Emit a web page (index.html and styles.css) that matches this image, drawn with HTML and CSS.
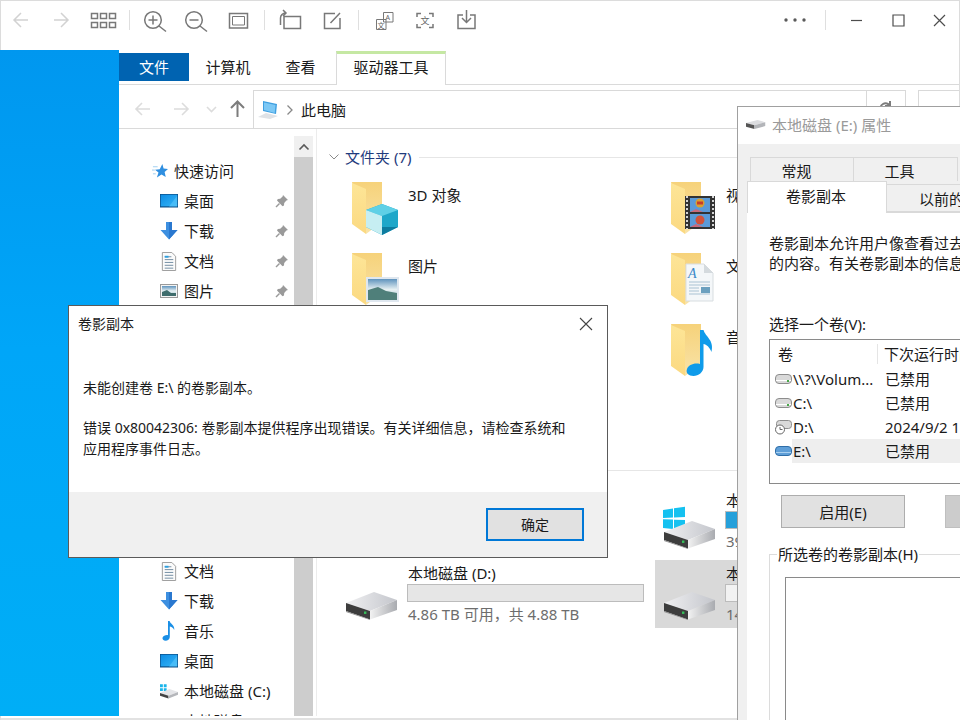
FILE: index.html
```html
<!DOCTYPE html>
<html lang="zh-CN">
<head>
<meta charset="utf-8">
<title>此电脑</title>
<link rel="stylesheet" href="styles.css">
</head>
<body>
<svg class="defs" aria-hidden="true">
  <defs>
    <linearGradient id="gTop" x1="0" y1="0" x2="1" y2="0"><stop offset="0" stop-color="#f0f0f2"/><stop offset="1" stop-color="#c4c6cc"/></linearGradient>
    <linearGradient id="gSide" x1="0" y1="0" x2="1" y2="0"><stop offset="0" stop-color="#f2f2f2"/><stop offset="1" stop-color="#a9abb0"/></linearGradient>
    <linearGradient id="gFold" x1="0" y1="0" x2="0" y2="1"><stop offset="0" stop-color="#f6d27a"/><stop offset="1" stop-color="#f9e3a8"/></linearGradient>
    <linearGradient id="gFlap" x1="0" y1="0" x2="0" y2="1"><stop offset="0" stop-color="#fde597"/><stop offset="1" stop-color="#fbd981"/></linearGradient>
    <linearGradient id="gMon" x1="0" y1="0" x2="1" y2="1"><stop offset="0" stop-color="#0d8be3"/><stop offset="1" stop-color="#35b6f7"/></linearGradient>
    <linearGradient id="gSky" x1="0" y1="0" x2="0" y2="1"><stop offset="0" stop-color="#5f93bd"/><stop offset=".5" stop-color="#e6f0f2"/><stop offset="1" stop-color="#9fc2cf"/></linearGradient>
    <symbol id="pin" viewBox="0 0 14 14"><path d="M8 1l5 5-1.600.6-2.200 2.500-.2 2.400-1.500.8L2 6.400l.8-1.400 2.400-.2 2.400-2.200z" fill="#9a9a9a"/><path d="M4.500 9.500L1 13" stroke="#9a9a9a" stroke-width="1.400"/></symbol>
    <symbol id="mon" viewBox="0 0 18 14"><rect width="18" height="13.500" fill="#0c4e86"/><rect x=".7" y=".7" width="16.600" height="11.600" fill="url(#gMon)"/><path d="M17 2L9 12.400h8z" fill="#5cc7fa" opacity=".6"/></symbol>
    <symbol id="arrowd" viewBox="0 0 18 18"><path d="M6 0h6v8h5.500L9 17.500.5 8H6z" fill="#3d8fe0"/><path d="M9 0h3v8h5.500L9 17.500z" fill="#2a78cf"/></symbol>
    <symbol id="docs" viewBox="0 0 16 20"><path d="M1 .5h10l4 4v15H1z" fill="#fbfbfb" stroke="#9a9a9a"/><path d="M3.500 5h7M3.500 8h9M3.500 11h9M3.500 14h9M3.500 17h9" stroke="#6f8aa0"/><path d="M3.500 5h4" stroke="#2c9fe0" stroke-width="2"/></symbol>
    <symbol id="pic" viewBox="0 0 18 14"><rect x=".5" y=".5" width="17" height="13" fill="#f4f4f4" stroke="#9a9a9a"/><rect x="2" y="2" width="14" height="10" fill="url(#gSky)"/><path d="M2 8l5-2 4 3 5 0v3H2z" fill="#3f6d6d"/></symbol>
    <symbol id="note" viewBox="0 0 14 20"><path d="M6 0h1.600c.6 3 5.400 4 4.600 9-.8-2.400-3-3.200-4.400-3.400V16c0 2.400-2.200 3.800-4.200 3.800S0 18.400.6 16.600 3.800 13.800 6 14.200z" fill="#1a8fe6"/></symbol>
    <symbol id="star" viewBox="0 0 17 16"><path d="M11 .5l1.300 4.800 4.700.6-3.600 3.200 1.200 5.400-4.500-2.900-4.900 3.400 1.700-5.400-3.700-3 5-.4z" fill="#2f8fe0"/><path d="M1 3.500h5M0 7h3M1 11h3" stroke="#9ccdf0"/></symbol>
    <symbol id="drive" viewBox="0 0 52 28"><path d="M0 11L28 0l23 8-27 11z" fill="url(#gTop)"/><path d="M0 11l24 8v8.500L0 19z" fill="#3d3d3d"/><path d="M24 19l27-11v10L24 27.500z" fill="url(#gSide)"/><path d="M0 19l24 8.500v.5L0 20z" fill="#8d8d8d"/><rect x="18" y="19.500" width="2.400" height="2.400" fill="#35c25a"/></symbol>
    <symbol id="folder" viewBox="0 0 32 52"><path d="M1 0h30v40L15 52z" fill="url(#gFold)"/><path d="M1 1l14 6v45L1 42z" fill="url(#gFlap)"/></symbol>
    <symbol id="hddS" viewBox="0 0 17 12"><rect x=".5" y="1.500" width="16" height="9" rx="3.500" fill="#d9d9d9" stroke="#8d8d8d"/><path d="M1 7.500h15" stroke="#fff"/><rect x="12" y="7" width="2" height="2" fill="#49a849"/></symbol>
  </defs>
</svg>

<div class="screen">
  <header class="toolbar">
    <div class="tb-left">
      <svg class="tb-icon" width="41" height="30"><path class="ln-off" d="M27 15H13M20 8l-7 7 7 7"/></svg>
      <svg class="tb-icon" width="41" height="30"><path class="ln-off" d="M12 15h14M19 8l7 7-7 7"/></svg>
      <svg class="tb-icon" width="41" height="30"><path class="ln" d="M8.500 8.500h6v5h-6zM17.500 8.500h6v5h-6zM26.500 8.500h6v5h-6zM8.500 17.500h6v5h-6zM17.500 17.500h6v5h-6zM26.500 17.500h6v5h-6z"/></svg>
      <span class="sep sep-a"></span>
      <svg class="tb-icon" width="41" height="30"><circle class="ln" cx="20" cy="15" r="8.300"/><path class="ln" d="M26 21l7 5.500M20 10.500v9M15.500 15h9"/></svg>
      <svg class="tb-icon" width="41" height="30"><circle class="ln" cx="20" cy="15" r="8.300"/><path class="ln" d="M26 21l7 5.500M15.500 15h9"/></svg>
      <svg class="tb-icon" width="41" height="30"><path class="ln" d="M14.500 8.500h18v14.500h-18z"/><path class="ln-thin" d="M17.500 11.500h12v8.500h-12z"/></svg>
      <span class="sep sep-b"></span>
      <svg class="tb-icon" width="41" height="30"><path class="ln" d="M13 11.500h16.500v12H13zM9.500 20v-7a5 5 0 0 1 5-5M12 5l3 3-3 3"/></svg>
      <svg class="tb-icon" width="41" height="30"><path class="ln" d="M23 8.500H12.500V23.500H28V13M18.500 18L28 8"/></svg>
      <span class="sep sep-c"></span>
      <svg class="tb-icon" width="41" height="30"><path class="ln-thin" d="M20.500 7.500h9.500v9.500h-9.500zM13.500 14.500h9.500v10h-9.500z" /><text class="glyph" x="22.500" y="15">A</text><text class="glyph" x="14.500" y="23">文</text></svg>
      <svg class="tb-icon" width="41" height="30"><path class="ln" d="M13 12V8.500h4M25 8.500h4V12M13 19v3.500h4M25 22.500h4V19"/><text class="glyph-l" x="16.500" y="19">文</text></svg>
      <svg class="tb-icon" width="41" height="30"><path class="ln" d="M18 10h-5v13.500h17V10h-5M21.500 5v12M17 13l4.500 4.500L26 13"/></svg>
    </div>
    <div class="tb-right">
      <svg class="tb-icon" width="41" height="30"><circle class="dot" cx="12" cy="15" r="1.700"/><circle class="dot" cx="21" cy="15" r="1.700"/><circle class="dot" cx="30" cy="15" r="1.700"/></svg>
      <span class="sep sep-d"></span>
      <svg class="tb-icon" width="41" height="30"><path class="ln-win" d="M15 15.500h11"/></svg>
      <svg class="tb-icon" width="41" height="30"><path class="ln-win" d="M16 10h11v11H16z"/></svg>
      <svg class="tb-icon" width="41" height="30"><path class="ln-win" d="M16 10l11 11M27 10L16 21"/></svg>
    </div>
  </header>

  <div class="desk">
    <div class="wallpaper"></div>
    <div class="explorer">
      <nav class="ribbon">
        <span class="rtab rtab-file">文件</span>
        <span class="rtab rtab-pc">计算机</span>
        <span class="rtab rtab-view">查看</span>
        <span class="rtab rtab-ctx">驱动器工具</span>
      </nav>

      <div class="navrow">
        <svg width="39" height="38"><path class="ln-faint" d="M27 19H13M19 13l-6 6 6 6"/></svg>
        <svg width="39" height="38"><path class="ln-faint" d="M12 19h14M20 13l6 6-6 6"/></svg>
        <svg width="21" height="38"><path class="ln-faint" d="M6 17l4.500 4.500L15 17"/></svg>
        <svg width="31" height="38"><path class="ln-up" d="M15.500 27V12M9 18l6.500-6.500L22 18"/></svg>
        <div class="addr">
          <svg class="pc" width="22" height="20" viewBox="0 0 22 20"><path d="M6 1l14 3-1 10-13-3z" fill="#3f9fe0"/><path d="M7 2.500l11.500 2.500-.8 8L7 10z" fill="#7cc8f5"/><path d="M1 17l8-4 12 3-8 3z" fill="#dfe2e6"/></svg>
          <svg width="8" height="12"><path class="ln-chev" d="M1.500 1.500L6 6l-4.500 4.500"/></svg>
          <span class="addr-text">此电脑</span>
        </div>
        <div class="refresh"><svg width="14" height="20"><path class="ln-up" d="M2 14a5 5 0 0 1 9-5M11 4v5H6"/></svg></div>
        <div class="search"></div>
      </div>

      <div class="pane">
        <aside class="side">
          <ul class="tree">
            <li class="row row-head"><svg width="16" height="16"><use href="#star"/></svg><span>快速访问</span></li>
            <li class="row"><svg width="18" height="14"><use href="#mon"/></svg><span>桌面</span><svg class="pin" width="14" height="14"><use href="#pin"/></svg></li>
            <li class="row"><svg width="18" height="18"><use href="#arrowd"/></svg><span>下载</span><svg class="pin" width="14" height="14"><use href="#pin"/></svg></li>
            <li class="row"><svg width="18" height="19"><use href="#docs"/></svg><span>文档</span><svg class="pin" width="14" height="14"><use href="#pin"/></svg></li>
            <li class="row"><svg width="18" height="14"><use href="#pic"/></svg><span>图片</span><svg class="pin" width="14" height="14"><use href="#pin"/></svg></li>
            <li class="tree-gap"></li>
            <li class="row"><svg width="18" height="19"><use href="#docs"/></svg><span>文档</span></li>
            <li class="row"><svg width="18" height="18"><use href="#arrowd"/></svg><span>下载</span></li>
            <li class="row"><svg width="18" height="20"><use href="#note"/></svg><span>音乐</span></li>
            <li class="row"><svg width="18" height="14"><use href="#mon"/></svg><span>桌面</span></li>
            <li class="row"><svg width="19" height="16" viewBox="0 0 19 16"><path d="M0 1h3v3H0zM4 1h3v3H4zM0 5h3v3H0zM4 5h3v3H4z" fill="#19b4ea"/><path d="M0 10l10-4 9 3-10 4z" fill="#e4e5e8"/><path d="M0 10l9 3v3l-9-3z" fill="#444"/><path d="M9 13l10-4v3l-10 4z" fill="#b5b7bb"/></svg><span>本地磁盘 (C:)</span></li>
            <li class="row"><svg width="19" height="16"></svg><span>本地磁盘 (D:)</span></li>
          </ul>
        </aside>
        <div class="scroll"><div class="scroll-up"><svg width="12" height="8"><path class="ln-scroll" d="M1.500 6.500L6 2l4.500 4.500"/></svg></div><div class="scroll-thumb"></div></div>

        <main class="content">
          <div class="sec-head">
            <svg width="10" height="8"><path class="ln-sec" d="M.5 1.500l4.500 4.500 4.500-4.500"/></svg>
            <span class="sec-title">文件夹 (7)</span>
            <span class="sec-line"></span>
          </div>
          <div class="folders">
            <div class="ftile">
              <svg class="ficon" width="56" height="60" viewBox="0 0 56 60">
                <use href="#folder" x="6" y="5" width="32" height="52"/>
                <path d="M37 27l16 6v17l-16 8-16-8V33z" fill="#1ea7c9"/><path d="M37 27l16 6-16 6-16-6z" fill="#5fd0e6"/><path d="M21 33l16 6v19l-16-8z" fill="#c6eef2"/><path d="M37 50l16 0-16 8z" fill="#0d7c9f"/>
              </svg>
              <span class="flabel">3D 对象</span>
            </div>
            <div class="ftile">
              <svg class="ficon" width="56" height="60" viewBox="0 0 56 60">
                <use href="#folder" x="7" y="5" width="32" height="52"/>
                <rect x="22" y="19" width="30" height="33" fill="#333"/><path class="sprocket" d="M24 19v33M50 19v33"/><rect x="27" y="21" width="20" height="14" fill="#5a9ad8"/><rect x="27" y="37" width="20" height="13" fill="#5a9ad8"/><circle cx="37" cy="26" r="4.500" fill="#d9a030"/><path d="M34 26h6" stroke="#c83a2a" stroke-width="3"/><circle cx="37" cy="43" r="4.500" fill="#d2523a"/><path d="M27 35l6-3 7 3zM27 50l6-3 7 3z" fill="#c86a7c"/>
              </svg>
              <span class="flabel">视频</span>
            </div>
            <div class="ftile">
              <svg class="ficon" width="56" height="60" viewBox="0 0 56 60">
                <use href="#folder" x="6" y="5" width="32" height="52"/>
                <rect x="21" y="29" width="33" height="25" fill="#dfe7ef"/><rect x="23" y="31" width="29" height="21" fill="url(#gSky)"/><path d="M23 42l10-3 8 4 11 2v7H23z" fill="#4f7f7a"/>
              </svg>
              <span class="flabel">图片</span>
            </div>
            <div class="ftile">
              <svg class="ficon" width="56" height="60" viewBox="0 0 56 60">
                <use href="#folder" x="7" y="5" width="32" height="52"/>
                <path d="M23 16h18l9 9v28H23z" fill="#f4f7f9" stroke="#d8dde0"/><path d="M41 16l9 9h-9z" fill="#d4dade"/><text class="doc-a" x="25" y="30">A</text><path d="M26 34h21M26 37h21M26 40h10M26 43h10M26 46h21" stroke="#a9c2d3"/><rect x="38" y="39" width="9" height="6" fill="#6ba0bf"/>
              </svg>
              <span class="flabel">文档</span>
            </div>
            <div class="ftile ftile-r">
              <svg class="ficon" width="56" height="60" viewBox="0 0 56 60">
                <use href="#folder" x="7" y="5" width="32" height="52"/>
                <path d="M37 11h3.500c2 7 11 10 8 22-2-5-5-7.500-8-8V48c0 5-5 9-10 9s-8-3-6.500-7 7-6.500 13-5z" fill="#0f9bea"/>
              </svg>
              <span class="flabel">音乐</span>
            </div>
          </div>

          <div class="sec-rule"></div>

          <div class="drives">
            <div class="dtile dtile-c">
              <svg class="dicon" width="55" height="68" viewBox="0 0 55 68">
                <path d="M0 23l10-1.500v9L0 31zM11 21.300l11-1.500V30l-11 .6zM0 32.300l10 .3V42L0 41zM11 32.700l11 .3v10l-11-1z" fill="#14c1f0"/>
                <use href="#drive" x="1" y="34" width="52" height="28"/>
              </svg>
              <div class="dinfo">
                <div class="dlabel">本地磁盘 (C:)</div>
                <div class="dbar"><div class="dfill dfill-c"></div></div>
                <div class="dsize">39.0 GB 可用，共 100 GB</div>
              </div>
            </div>
            <div class="dtile dtile-d">
              <svg class="dicon" width="55" height="68" viewBox="0 0 55 68"><use href="#drive" x="1" y="32" width="52" height="28"/></svg>
              <div class="dinfo">
                <div class="dlabel">本地磁盘 (D:)</div>
                <div class="dbar"></div>
                <div class="dsize">4.86 TB 可用，共 4.88 TB</div>
              </div>
            </div>
            <div class="dtile dtile-e">
              <svg class="dicon" width="55" height="68" viewBox="0 0 55 68"><use href="#drive" x="1" y="32" width="52" height="28"/></svg>
              <div class="dinfo">
                <div class="dlabel">本地磁盘 (E:)</div>
                <div class="dbar dbar-w"></div>
                <div class="dsize">14.0 TB 可用，共 14.5 TB</div>
              </div>
            </div>
          </div>
        </main>
      </div>
    </div>
  </div>
  <footer class="statusbar"></footer>
</div>

<section class="props">
  <div class="props-title">
    <svg width="20" height="11" viewBox="0 0 26 14"><path d="M0 5l15-4 10 3-14 4z" fill="#dcdde0"/><path d="M0 5l11 3v5L0 10z" fill="#555"/><path d="M11 8l14-4v5l-14 4z" fill="#b3b5b9"/></svg>
    <span>本地磁盘 (E:) 属性</span>
  </div>
  <div class="props-body">
    <div class="tabs-back">
      <span class="tab-back tab-b1">常规</span>
      <span class="tab-back tab-b2">工具</span>
    </div>
    <div class="tabs-front">
      <span class="tab-active">卷影副本</span>
      <span class="tab-next">以前的版本</span>
    </div>
    <div class="panel">
      <p class="panel-text">卷影副本允许用户像查看过去<br>的内容。有关卷影副本的信息</p>
      <div class="vol-label">选择一个卷(V):</div>
      <div class="vol-list">
        <div class="vol-head"><span class="vh-a">卷</span><span class="vh-b">下次运行时间</span></div>
        <div class="vol-row"><svg width="17" height="12"><use href="#hddS"/></svg><div class="vol-cells"><span class="vol-name">\\?\Volum...</span><span>已禁用</span></div></div>
        <div class="vol-row"><svg width="17" height="12"><use href="#hddS"/></svg><div class="vol-cells"><span class="vol-name">C:\</span><span>已禁用</span></div></div>
        <div class="vol-row"><svg width="17" height="16" viewBox="0 0 17 16"><rect x="1.500" y="1.500" width="15" height="8" rx="3" fill="#d9d9d9" stroke="#8d8d8d"/><circle cx="5" cy="10.500" r="4.500" fill="#fff" stroke="#666"/><path d="M5 8v2.500h2.500" stroke="#666" fill="none"/></svg><div class="vol-cells"><span class="vol-name">D:\</span><span>2024/9/2 10:00</span></div></div>
        <div class="vol-row"><svg width="17" height="12" viewBox="0 0 17 12"><rect x=".5" y="1.500" width="16" height="9" rx="3.500" fill="#5f9fd8" stroke="#2f6ea8"/><path d="M1 7.500h15" stroke="#a9d0f0"/></svg><div class="vol-cells vol-sel"><span class="vol-name">E:\</span><span>已禁用</span></div></div>
      </div>
      <div class="vol-btns"><button class="btn" type="button">启用(E)</button><button class="btn btn-off" type="button" aria-label="禁用"></button></div>
      <fieldset class="group">
        <legend>所选卷的卷影副本(H)</legend>
        <div class="copies"></div>
      </fieldset>
    </div>
  </div>
</section>

<section class="dialog">
  <div class="dlg-title">
    <span>卷影副本</span>
    <svg width="14" height="14"><path class="ln-dlg" d="M1 1l12 12M13 1L1 13"/></svg>
  </div>
  <div class="dlg-body">
    <p class="dlg-p">未能创建卷 E:\ 的卷影副本。</p>
    <p class="dlg-p">错误 0x80042306: 卷影副本提供程序出现错误。有关详细信息，请检查系统和<br>应用程序事件日志。</p>
  </div>
  <div class="dlg-foot"><button class="dlg-ok" type="button">确定</button></div>
</section>
</body>
</html>
```

FILE: styles.css
```css
* { box-sizing: border-box; }
html, body { margin: 0; padding: 0; width: 960px; height: 720px; overflow: hidden; background: #fff; }
body { position: relative; font-family: "Noto Sans", "Noto Sans CJK SC", sans-serif; font-size: 15px; line-height: 20px; color: #1a1a1a; }
.defs { position: absolute; width: 0; height: 0; }
svg { display: block; flex: none; }
ul { list-style: none; margin: 0; padding: 0; }
p { margin: 0; }

.screen { width: 960px; height: 720px; border: 1px solid #dcdcdc; border-bottom: 0; display: flex; flex-direction: column; }

/* top toolbar */
.toolbar { height: 49px; padding-top: 4px; display: flex; justify-content: space-between; align-items: flex-start; }
.tb-left, .tb-right { display: flex; align-items: center; height: 30px; }
.sep { width: 1px; height: 20px; background: #dfdfdf; }
.sep-a { margin: 0 3px 0 5px; }
.sep-b { margin: 0 6px 0 8px; }
.sep-c { margin: 0 4px 0 5px; }
.sep-d { margin: 0 10px; }
.ln, .ln-off, .ln-thin, .ln-win, .ln-faint, .ln-up, .ln-chev, .ln-scroll, .ln-sec, .ln-dlg { fill: none; }
.ln { stroke: #787878; stroke-width: 1.5; }
.ln-thin { stroke: #787878; stroke-width: 1; }
.ln-off { stroke: #d2d2d2; stroke-width: 1.5; }
.ln-win { stroke: #4d4d4d; stroke-width: 1.2; }
.ln-faint { stroke: #dcdcdc; stroke-width: 1.6; }
.ln-up { stroke: #7c7c7c; stroke-width: 2; }
.ln-chev { stroke: #888; stroke-width: 1.3; }
.ln-scroll { stroke: #5a5a5a; stroke-width: 1.6; }
.ln-sec { stroke: #8a8a8a; stroke-width: 1; }
.ln-dlg { stroke: #444; stroke-width: 1.1; }
.dot { fill: #5a5a5a; }
.glyph { font-size: 7px; fill: #666; }
.glyph-l { font-size: 9px; fill: #666; }
.sprocket { fill: none; stroke: #d5d5d5; stroke-width: 2; stroke-dasharray: 2 2; }

/* desktop + explorer */
.desk { flex: 1; display: flex; min-height: 0; }
.wallpaper { width: 119px; margin-left: -1px; background: linear-gradient(180deg, #0097ef 0%, #00a6f8 45%, #00aef6 100%); }
.explorer { flex: 1; min-width: 0; display: flex; flex-direction: column; }

.ribbon { height: 35px; display: flex; align-items: flex-end; border-bottom: 1px solid #dadada; position: relative; }
.rtab { height: 31px; display: flex; align-items: center; justify-content: center; }
.rtab-file { width: 70px; height: 28px; margin-bottom: 3px; background: #0063b1; color: #fff; padding-bottom: 1px; }
.rtab-pc { width: 78px; padding-bottom: 4px; }
.rtab-view { width: 69px; padding-bottom: 4px; padding-right: 2px; }
.rtab-ctx { width: 110px; height: 34px; padding-bottom: 5px; border-top: 3px solid #c5e8a3; border-left: 1px solid #dadada; border-right: 1px solid #dadada; background: #fff; margin-bottom: -1px; }

.navrow { height: 44px; display: flex; align-items: flex-start; padding: 5px 0 0 4px; border-bottom: 1px solid #dadada; }
.addr { flex: 1; height: 39px; display: flex; align-items: center; border: 1px solid #d9d9d9; border-right: 0; padding: 0 0 0 3px; }
.pc { margin-right: 7px; }
.addr-text { margin-left: 7px; }
.refresh { width: 40px; height: 39px; border: 1px solid #d9d9d9; display: flex; justify-content: center; padding-top: 6px; margin-right: 12px; }
.search { width: 41px; height: 39px; border: 1px solid #d9d9d9; border-right: 0; }

.pane { flex: 1; min-height: 0; display: flex; }
.side { width: 175px; padding-top: 27px; overflow: hidden; }
.row { height: 30px; display: flex; align-items: center; gap: 6px; padding: 0 5px 0 41px; white-space: nowrap; }
.row svg:first-child { width: 18px; }
.row-head { padding-left: 33px; }
.row-head svg:first-child { width: 16px; }
.pin { margin-left: auto; }
.tree-gap { height: 250px; }
.scroll { width: 19px; padding-top: 7px; display: flex; flex-direction: column; }
.scroll-up { height: 21px; background: #f0f0f0; display: flex; align-items: center; justify-content: center; flex: none; }
.scroll-thumb { flex: 1; background: #cdcdcd; }

.content { flex: 1; min-width: 0; border-left: 1px solid #ececec; margin-left: 3px; padding: 17px 0 0 20px; overflow: hidden; }
.sec-head { height: 22px; display: flex; align-items: center; margin-left: -8px; }
.sec-title { margin-left: 6px; color: #1f3b7d; }
.sec-line { flex: 1; height: 1px; background: #e6e6e6; margin-left: 8px; }
.folders { margin-top: 9px; display: grid; grid-template-columns: 318px 318px; grid-auto-rows: 71px; }
.ftile { display: flex; align-items: flex-start; padding-left: 8px; }
.ftile-r { grid-column: 2; grid-row: 3; }
.ficon { margin-right: 7px; }
.flabel { padding-top: 8px; white-space: nowrap; }
.doc-a { font-size: 14px; font-style: italic; fill: #3b88c8; font-family: "Liberation Serif", serif; }

.sec-rule { height: 1px; margin: 80px 0 0 0; background: #e6e6e6; }
.drives { margin-top: 16px; display: grid; grid-template-columns: 318px 318px; grid-template-rows: 68px 68px; row-gap: 5px; }
.dtile { display: flex; padding-left: 8px; }
.dtile-c { grid-column: 2; grid-row: 1; }
.dtile-d { grid-column: 1; grid-row: 2; }
.dtile-e { grid-column: 2; grid-row: 2; background: #d9d9d9; }
.dicon { margin-right: 8px; }
.dinfo { width: 238px; padding-top: 3px; }
.dlabel { height: 20px; white-space: nowrap; }
.dbar { width: 237px; height: 18px; margin: 1px 0 0 -1px; background: #e6e6e6; border: 1px solid #bcbcbc; }
.dbar-w { background: #f2f2f2; }
.dfill { height: 100%; background: #26a0da; }
.dfill-c { width: 60%; }
.dsize { margin-top: 2px; color: #6d6d6d; white-space: nowrap; }

.statusbar { height: 4px; flex: none; background: #fff; border-bottom: 2px solid #e2e2e2; }

/* properties window */
.props { position: absolute; left: 737px; top: 106px; width: 223px; height: 614px; overflow: hidden; border: 1px solid #a0a0a0; border-right: 0; border-bottom: 0; background: #f0f0f0; }
.props-title { height: 37px; background: #fff; display: flex; align-items: center; gap: 6px; padding-left: 8px; padding-bottom: 2px; color: #9a9a9a; white-space: nowrap; }
.props-body { padding-top: 13px; height: 602px; display: flex; flex-direction: column; }
.tabs-back { height: 24px; display: flex; padding-left: 12px; flex: none; }
.tab-back { height: 24px; border: 1px solid #d9d9d9; border-bottom: 0; margin-right: -1px; display: flex; align-items: flex-start; justify-content: center; line-height: 26px; background: #f0f0f0; flex: none; }
.tab-b1 { width: 104px; padding-right: 11px; }
.tab-b2 { width: 105px; padding-right: 12px; }
.tabs-front { height: 31px; display: flex; padding-left: 9px; position: relative; z-index: 1; flex: none; }
.tab-active { width: 140px; height: 32px; flex: none; background: #fff; border: 1px solid #d9d9d9; border-bottom: 0; display: flex; justify-content: center; padding: 4px 2px 0 0; }
.tab-next { width: 110px; height: 28px; flex: none; margin: 3px 0 0 -1px; border: 1px solid #d9d9d9; background: #f0f0f0; padding: 4px 0 0 32px; white-space: nowrap; overflow: hidden; }
.panel { flex: 1; margin-left: 9px; background: #fff; border-top: 1px solid #d9d9d9; padding: 20px 0 0 22px; white-space: nowrap; }
.panel-text { line-height: 20px; }
.vol-label { margin-top: 41px; }
.vol-list { width: 240px; height: 145px; margin-top: 5px; border: 1px solid #8a8a8a; padding-top: 1px; }
.vol-head { height: 26px; display: flex; align-items: center; }
.vh-a { width: 108px; padding-left: 8px; border-right: 1px solid #e5e5e5; }
.vh-b { padding-left: 6px; }
.vol-row { height: 24px; display: flex; align-items: center; padding-left: 5px; }
.vol-cells { flex: 1; height: 24px; display: flex; align-items: center; padding-left: 1px; line-height: 24px; }
.vol-name { width: 92px; }
.vol-sel { background: #eeeeee; }
.vol-btns { margin: 11px 0 0 12px; display: flex; gap: 40px; }
.btn { width: 124px; height: 33px; flex: none; background: #e1e1e1; border: 1px solid #adadad; font: inherit; color: #1a1a1a; padding: 0; }
.btn-off { background: #cccccc; border-color: #bfbfbf; }
.group { margin: 16px 0 0 0; padding: 0 0 0 15px; width: 240px; height: 200px; border: 1px solid #dcdcdc; border-right: 0; border-bottom: 0; }
.group legend { margin-left: -8px; padding: 0 1px; line-height: 20px; }
.copies { margin-top: 13px; width: 220px; height: 170px; border: 1px solid #8a8a8a; background: #fff; }

/* error dialog */
.dialog { position: absolute; left: 68px; top: 305px; width: 540px; height: 253px; background: #fff; border: 1px solid #5a5a5a; display: flex; flex-direction: column; font-size: 14px; }
.dlg-title { height: 38px; flex: none; display: flex; align-items: center; justify-content: space-between; padding: 0 14px 2px 9px; font-size: 14px; }
.dlg-body { flex: 1; padding: 33px 14px 0; line-height: 21px; }
.dlg-p { margin-bottom: 19px; }
.dlg-foot { height: 65px; flex: none; background: #f0f0f0; display: flex; justify-content: flex-end; align-items: center; padding: 0 23px 0 0; }
.dlg-ok { width: 98px; height: 33px; border: 2px solid #0078d7; background: #e1e1e1; font: inherit; color: #1a1a1a; padding: 0; }
```
